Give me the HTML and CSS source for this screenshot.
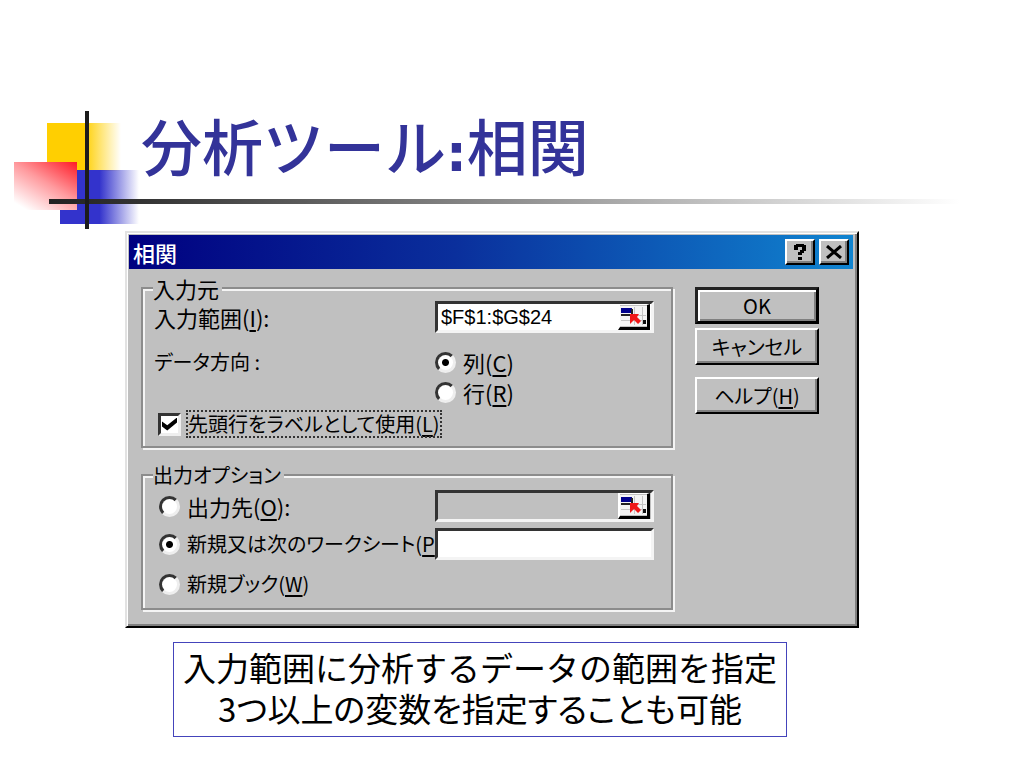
FILE: index.html
```html
<!DOCTYPE html>
<html lang="ja">
<head>
<meta charset="utf-8">
<meta name="viewport" content="width=device-width, initial-scale=1">
<title>分析ツール:相関</title>
<link rel="stylesheet" href="styles.css">
</head>
<body>
<svg class="symbols" aria-hidden="true">
  <symbol id="range-icon" viewBox="0 0 27 20">
    <path fill="#f4f4f4" d="M0 0h27v20H0z"/>
    <path stroke="#c4c4c4" stroke-width="1" fill="none" d="M1 9.500h25M1 14.500h25M14.500 1v18M22.500 1v18"/>
    <path fill="#00008c" d="M1 2h11v5H1z"/>
    <path fill="#222" d="M1 8h10V3h2v7H1z"/>
    <path fill="#f01818" d="M10 8h9l-2 3 4 4-3 3-4-4-4 4z"/>
    <path fill="#111" d="M23 14h3v4h-3z"/>
  </symbol>
</svg>
<main class="slide">
  <header class="heading">
    <svg class="mark" width="140" height="130" viewBox="0 0 140 130" aria-hidden="true">
      <defs>
        <linearGradient id="yellow"><stop offset="0.500" stop-color="#ffcf01"/><stop offset="1" stop-color="#ffcf01" stop-opacity="0"/></linearGradient>
        <linearGradient id="blue"><stop offset="0.500" stop-color="#3333cc"/><stop offset="1" stop-color="#3333cc" stop-opacity="0"/></linearGradient>
        <linearGradient id="red" x1="1" y1="0" x2="0.200" y2="1"><stop offset="0" stop-color="#ff1a26"/><stop offset="0.500" stop-color="#ff9a9e"/><stop offset="1" stop-color="#fff"/></linearGradient>
      </defs>
      <path fill="url(#yellow)" d="M47 18h74v48H47z"/>
      <path fill="url(#blue)" d="M60 65h79v54H60z"/>
      <path fill="url(#red)" d="M14 57h63v48H14z"/>
    </svg>
    <div class="rule"></div>
    <div class="stem"></div>
    <h1>分析ツール<span class="colon">:</span>相関</h1>
  </header>

  <section class="dialog" aria-labelledby="dialog-title">
    <div class="titlebar">
      <h2 id="dialog-title">相関</h2>
      <button class="tool" type="button" aria-label="ヘルプ"><svg width="14" height="17" viewBox="0 0 14 17"><path fill="#000" d="M1 1h2V0h8v1h2v6h-2v2H9v2H5V8h2V6h2V3H5v3H1zM5 13h4v3H5z"/></svg></button>
      <button class="tool" type="button" aria-label="閉じる"><svg width="16" height="14" viewBox="0 0 16 14"><path stroke="#000" stroke-width="3" d="M1 1l14 12M15 1L1 13"/></svg></button>
    </div>
    <form class="content">
      <div class="groups">
        <fieldset class="input">
          <legend>入力元</legend>
          <div class="row first">
            <label for="range">入力範囲(<u>I</u>):</label>
            <div class="field"><input id="range" type="text" value="$F$1:$G$24"><button class="pick" type="button" aria-label="範囲を選択"><svg width="27" height="20"><use href="#range-icon"/></svg></button></div>
          </div>
          <div class="row direction" role="radiogroup" aria-labelledby="dir">
            <span id="dir" class="caption kana">データ方向 :</span>
            <div class="choices">
              <label class="choice"><input type="radio" name="direction" checked><span>列(<u>C</u>)</span></label>
              <label class="choice"><input type="radio" name="direction"><span>行(<u>R</u>)</span></label>
            </div>
          </div>
          <label class="choice check kana"><input type="checkbox" checked><span class="focused">先頭行をラベルとして使用(<u>L</u>)</span></label>
        </fieldset>
        <fieldset>
          <legend class="kana">出力オプション</legend>
          <div class="row">
            <label class="choice"><input type="radio" name="output"><span>出力先(<u>O</u>):</span></label>
            <div class="field off"><input type="text" aria-label="出力先" disabled><button class="pick" type="button" aria-label="出力先を選択"><svg width="27" height="20"><use href="#range-icon"/></svg></button></div>
          </div>
          <div class="row">
            <label class="choice kana"><input type="radio" name="output" checked><span>新規又は次のワークシート(<u>P</u></span></label>
            <div class="field"><input type="text" aria-label="ワークシート名"></div>
          </div>
          <div class="row last">
            <label class="choice kana"><input type="radio" name="output"><span>新規ブック(<u>W</u>)</span></label>
          </div>
        </fieldset>
      </div>
      <div class="actions">
        <button class="push default" type="button">OK</button>
        <button class="push" type="button">キャンセル</button>
        <button class="push help" type="button">ヘルプ(<u>H</u>)</button>
      </div>
    </form>
  </section>

  <div class="note">
    <p>入力範囲に分析するデータの範囲を指定</p>
    <p class="tight">3つ以上の変数を指定することも可能</p>
  </div>
</main>
</body>
</html>
```
FILE: styles.css
```css
* { box-sizing: border-box; }
body { margin: 0; background: #fff; color: #000; font-family: "Noto Sans CJK JP", sans-serif; }
.symbols { position: absolute; width: 0; height: 0; }
.slide { display: flow-root; }

.heading { position: relative; padding: 101px 48px 42px 141px; }
.heading h1 { position: relative; margin: 0; color: #333399; font-size: 61px; line-height: 88px; font-weight: 500; }
.colon { font-family: "DejaVu Sans", sans-serif; font-size: 52px; font-weight: 700; line-height: 1; }
.mark { position: absolute; left: 0; top: 105px; }
.rule { position: absolute; left: 49px; right: 64px; top: 199px; height: 5px; background: linear-gradient(to right, #222 0%, #333 10%, #fff 100%); }
.stem { position: absolute; left: 85px; top: 111px; width: 4px; height: 118px; background: #1c1c1c; }

.dialog { margin: 0 165px 0 125px; padding: 2px 2px 16px 2px; background: #c0c0c0; border: 2px solid; border-color: #e2e2e2 #000 #000 #e2e2e2; box-shadow: inset 1px 1px #fff, inset -2px -2px #808080; font-size: 22px; font-feature-settings: "palt"; }
.titlebar { display: flex; align-items: center; gap: 4px; height: 34px; margin-right: 2px; padding: 0 4px; background: linear-gradient(to right, #000080, #0a2f9c 45%, #1084d0); }
.titlebar h2 { flex: 1; margin: 0; color: #fff; font-size: 22px; line-height: 30px; font-weight: 500; }
button { padding: 0; color: #000; font: inherit; font-feature-settings: inherit; background: #c0c0c0; border: 2px solid; border-color: #fff #000 #000 #fff; box-shadow: inset -2px -2px #808080; }
.tool { display: grid; place-items: center; width: 30px; height: 26px; }

.content { display: grid; grid-template-columns: 1fr 124px; gap: 22px; padding: 7px 36px 0 12px; }
.groups { display: grid; gap: 15px; align-content: start; min-width: 0; }
fieldset { min-width: 0; margin: 0; padding: 0 17px 7px 10px; border: 2px solid #8c8c8c; box-shadow: 2px 2px #f4f4f4, inset 2px 2px #f4f4f4; }
.input { padding-bottom: 10px; }
legend { padding: 0 3px 0 0; background: #c0c0c0; line-height: 24px; }
.kana { font-size: 20px; }
.row { display: grid; grid-template-columns: 281px 1fr; align-items: center; min-height: 38px; padding-left: 1px; }
.row > * { min-width: 0; overflow: hidden; white-space: nowrap; }
.row > label, .caption { line-height: 30px; }
.row > .choice { padding-left: 5px; }
.first { min-height: 34px; }
.direction { align-items: start; padding-top: 13px; }
.last { padding-top: 4px; }
.choices { display: grid; }
.choice { display: flex; align-items: center; gap: 7px; line-height: 30px; white-space: nowrap; }
.check { padding: 5px 0 0 5px; }
.focused { line-height: 24px; outline: 2px dotted #333; }
u { text-decoration-thickness: 2px; text-underline-offset: 3px; }

.field { display: flex; height: 32px; padding-right: 1px; background: #fff; border: 3px solid; border-color: #333 #f4f4f4 #f4f4f4 #333; }
.field input { flex: 1; width: 100%; min-width: 0; padding: 0 3px; border: 0; color: #000; background: transparent; font: 20px "Liberation Sans", sans-serif; }
.off { background: #c0c0c0; }
.pick { display: grid; place-items: center; width: 32px; height: 26px; box-shadow: none; border-width: 1px 3px 3px 2px; }

input[type="radio"] { appearance: none; flex: none; width: 21px; height: 21px; margin: 0; border: 3px solid; border-color: #333 #eee #eee #333; border-radius: 50%; background: #fff; }
input[type="radio"]:checked { background: radial-gradient(circle, #000 3px, #fff 4px); }
input[type="checkbox"] { appearance: none; flex: none; display: grid; place-items: center; width: 23px; height: 23px; margin: 0; border: 3px solid; border-color: #333 #eee #eee #333; background: #fff; }
input[type="checkbox"]:checked::before { content: ""; width: 15px; height: 13px; background: #000; clip-path: polygon(0 30%, 35% 60%, 100% 0, 100% 38%, 35% 100%, 0 70%); }

.actions { display: grid; gap: 4px; align-content: start; padding-top: 11px; }
.push { height: 37px; font-size: 20px; line-height: 28px; }
.default { border: 3px solid; border-color: #222 #000 #000 #222; box-shadow: inset 2px 2px #fff, inset -2px -2px #808080; }
.help { margin-top: 8px; }

.note { width: fit-content; margin: 14px auto 0 calc(50% - 339px); padding: 4px 9px 7px; border: 1px solid #4444bb; font-size: 33px; line-height: 41px; text-align: center; }
.note p { margin: 0; }
.tight { font-feature-settings: "palt"; }
```
